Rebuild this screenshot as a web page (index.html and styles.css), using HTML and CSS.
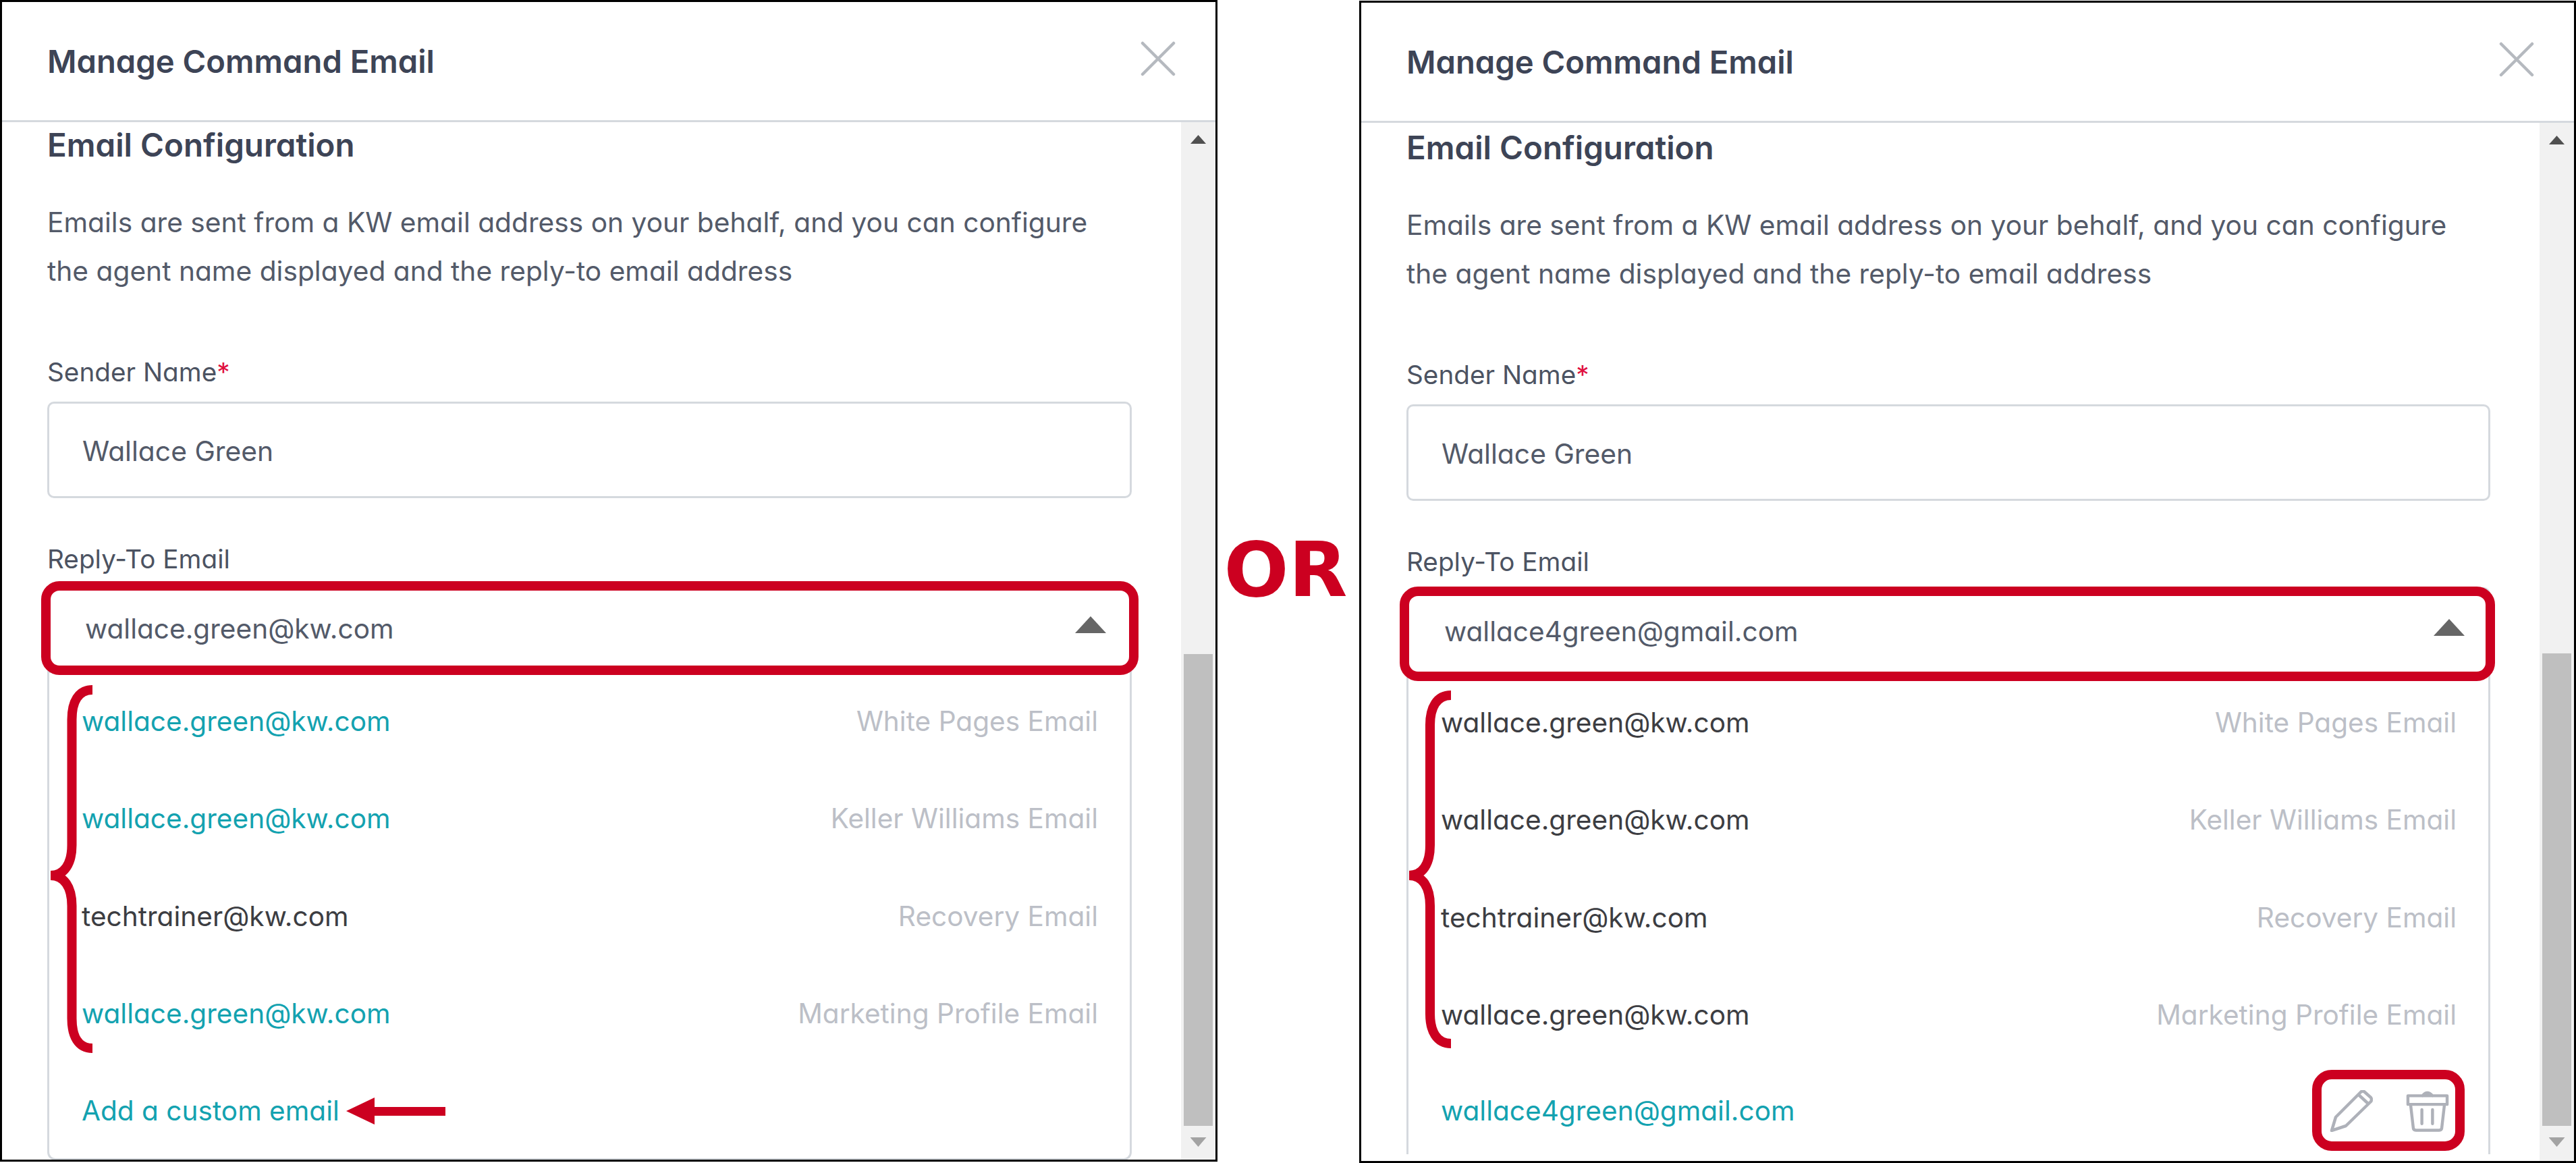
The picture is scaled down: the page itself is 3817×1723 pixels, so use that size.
FILE: index.html
```html
<!DOCTYPE html>
<html lang="en">
<head>
<meta charset="utf-8">
<title>Manage Command Email</title>
<link rel="stylesheet" href="styles.css">
</head>
<body>
<main class="stage">
  <section class="panel panel-a">
    <header class="head">
      <h1 class="title">Manage Command Email</h1>
      <svg class="close" viewBox="0 0 52 52"><path d="M3 3L49 49M49 3L3 49"/></svg>
    </header>
    <div class="body">
      <div class="content">
        <h2 class="subtitle">Email Configuration</h2>
        <p class="intro">Emails are sent from a KW email address on your behalf, and you can configure<br>the agent name displayed and the reply-to email address</p>
        <label class="label label-sender">Sender Name<span class="req">*</span></label>
        <div class="input">Wallace Green</div>
        <label class="label label-reply">Reply-To Email</label>
        <div class="select"><span>wallace.green@kw.com</span><i class="caret"></i></div>
        <ul class="list">
          <li class="row"><span class="teal">wallace.green@kw.com</span><span class="tag">White Pages Email</span></li>
          <li class="row"><span class="teal">wallace.green@kw.com</span><span class="tag">Keller Williams Email</span></li>
          <li class="row"><span class="dark">techtrainer@kw.com</span><span class="tag">Recovery Email</span></li>
          <li class="row"><span class="teal">wallace.green@kw.com</span><span class="tag">Marketing Profile Email</span></li>
          <li class="row row-last"><span class="teal">Add a custom email</span></li>
        </ul>
      </div>
      <div class="scroll">
        <i class="arrow-up"></i>
        <div class="thumb"></div>
        <i class="arrow-down"></i>
      </div>
    </div>
  </section>

  <div class="or">OR</div>

  <section class="panel panel-b">
    <header class="head">
      <h1 class="title">Manage Command Email</h1>
      <svg class="close" viewBox="0 0 52 52"><path d="M3 3L49 49M49 3L3 49"/></svg>
    </header>
    <div class="body">
      <div class="content">
        <h2 class="subtitle">Email Configuration</h2>
        <p class="intro">Emails are sent from a KW email address on your behalf, and you can configure<br>the agent name displayed and the reply-to email address</p>
        <label class="label label-sender">Sender Name<span class="req">*</span></label>
        <div class="input">Wallace Green</div>
        <label class="label label-reply">Reply-To Email</label>
        <div class="select"><span>wallace4green@gmail.com</span><i class="caret"></i></div>
        <ul class="list">
          <li class="row"><span class="dark">wallace.green@kw.com</span><span class="tag">White Pages Email</span></li>
          <li class="row"><span class="dark">wallace.green@kw.com</span><span class="tag">Keller Williams Email</span></li>
          <li class="row"><span class="dark">techtrainer@kw.com</span><span class="tag">Recovery Email</span></li>
          <li class="row"><span class="dark">wallace.green@kw.com</span><span class="tag">Marketing Profile Email</span></li>
          <li class="row row-last">
            <span class="teal">wallace4green@gmail.com</span>
            <span class="actions">
              <svg class="icon" viewBox="0 0 64 62"><path d="M3 60L9 40L46 3Q49 0 52 3L61 11Q63 14 61 17L24 53ZM43 7L57 20"/></svg>
              <svg class="icon" viewBox="0 0 65 62"><path d="M3 8H62V21H3ZM25 8Q32 -1 40 8M7 21L11 56Q11 60 15 60H50Q54 60 54 56L58 21M24 29V50M40 29V50"/></svg>
            </span>
          </li>
        </ul>
      </div>
      <div class="scroll">
        <i class="arrow-up"></i>
        <div class="thumb"></div>
        <i class="arrow-down"></i>
      </div>
    </div>
  </section>

  <svg class="marks" viewBox="0 0 3817 1723">
    <rect class="mark" x="68" y="868" width="1612" height="125" rx="20"/>
    <path class="mark" d="M137 1022C116 1022 106.500 1040 106.500 1066V1252C106.500 1280 95 1297 75 1297C95 1297 106.500 1314 106.500 1342V1509C106.500 1535 116 1553 137 1553"/>
    <path class="mark-fill" d="M513 1646L555 1626V1640H660V1653H555V1666Z"/>
    <rect class="mark" x="2081" y="876" width="1609" height="126" rx="20"/>
    <path class="mark" d="M2150 1030C2129 1030 2119 1048 2119 1074V1252C2119 1280 2108 1297 2088 1297C2108 1297 2119 1314 2119 1342V1502C2119 1528 2129 1546 2150 1546"/>
    <rect class="mark" x="3433" y="1592" width="212" height="106" rx="22"/>
  </svg>
</main>
</body>
</html>
```
FILE: styles.css
```css
* { box-sizing: border-box; }
html, body { margin: 0; padding: 0; background: #fff; }
body { font-family: "Inter", "Lato", sans-serif; font-feature-settings: "cv11" 1; color: #454c5c; }

.stage { position: relative; display: flex; align-items: flex-start; width: 3817px; height: 1723px; overflow: hidden; background: #fff; }

.panel { display: flex; flex-direction: column; border: 3px solid #000; background: #fff; }
.panel-a { width: 1804px; height: 1721px; }
.panel-b { width: 1803px; height: 1722px; margin-top: 1px; }

.head { display: flex; align-items: center; justify-content: space-between; flex: none; height: 178px; padding: 0 59px 0 67px; border-bottom: 3px solid #d5d9de; }
.title { margin: 0; font-size: 47.200px; font-weight: 600; color: #3d4456; }
.close { width: 52px; height: 52px; margin-bottom: 8px; fill: none; stroke: #b5b9bf; stroke-width: 4.500; stroke-linecap: round; }

.body { display: flex; flex: 1; min-height: 0; overflow: hidden; }
.content { flex: 1; min-width: 0; padding: 0 73px 0 67px; }

.subtitle { margin: 0; font-size: 47.500px; line-height: 68px; font-weight: 600; color: #3d4456; }
.panel-b .subtitle { margin-top: 3px; }
.intro { margin: 45px 0 0; font-size: 40.700px; line-height: 72px; font-weight: 400; color: #535a69; }

.label { display: block; font-size: 38.700px; line-height: 50px; color: #4c5362; }
.label-sender { margin-top: 88px; }
.label-reply { margin-top: 65px; }
.req { color: #e0103f; }

.input { display: flex; align-items: center; height: 143px; margin-top: 19px; padding: 3px 0 0 49px; border: 3px solid #d5d9de; border-radius: 10px; font-size: 40.800px; color: #535a69; }

.select { display: flex; align-items: center; justify-content: space-between; height: 131px; margin-top: 13px; padding: 0 35px 0 53px; border: 3px solid #d5d9de; border-radius: 10px 10px 0 0; font-size: 40.600px; color: #535a69; }
.caret { display: block; width: 46px; height: 25px; margin-bottom: 12px; background: #666; clip-path: polygon(50% 0, 100% 100%, 0 100%); }

.list { margin: -3px 0 0; padding: 0; list-style: none; border-left: 3px solid #d5d9de; border-right: 3px solid #d5d9de; }
.panel-a .list { margin-top: -1px; border-bottom: 3px solid #d5d9de; border-radius: 0 0 12px 12px; }
.row { display: flex; align-items: center; justify-content: space-between; height: 144.500px; padding: 0 47px 0 48px; font-size: 40.600px; }
.panel-a .row-last { height: 142px; }
.panel-b .row-last { height: 134px; padding-top: 5px; }
.teal { color: #13a2b0; }
.dark { color: #3c3d42; }
.tag { color: #bcbfc7; }

.actions { display: flex; gap: 49px; margin-right: 11px; }
.icon { width: 64px; height: 62px; fill: none; stroke: #aeb1b9; stroke-width: 4.500; stroke-linejoin: round; stroke-linecap: round; }

.scroll { display: flex; flex-direction: column; align-items: center; flex: none; width: 51px; padding-top: 19px; background: #f1f1f1; }
.arrow-up { display: block; width: 23px; height: 13px; background: #505050; clip-path: polygon(50% 0, 100% 100%, 0 100%); }
.arrow-down { display: block; width: 24px; height: 14px; margin-top: 17px; background: #a3a3a3; clip-path: polygon(0 0, 100% 0, 50% 100%); }
.thumb { width: 43px; height: 699px; margin-top: 756px; background: #bfbfbf; }
.panel-b .thumb { margin-top: 754px; height: 700px; }

.or { flex: none; width: 210px; margin-top: 779px; padding-right: 8px; font-family: "DejaVu Sans", sans-serif; font-weight: 700; font-size: 113px; line-height: 130px; text-align: center; color: #cc0020; }

.marks { position: absolute; left: 0; top: 0; width: 3817px; height: 1723px; pointer-events: none; }
.mark { fill: none; stroke: #cc0020; stroke-width: 14; }
.mark-fill { fill: #cc0020; }
```
